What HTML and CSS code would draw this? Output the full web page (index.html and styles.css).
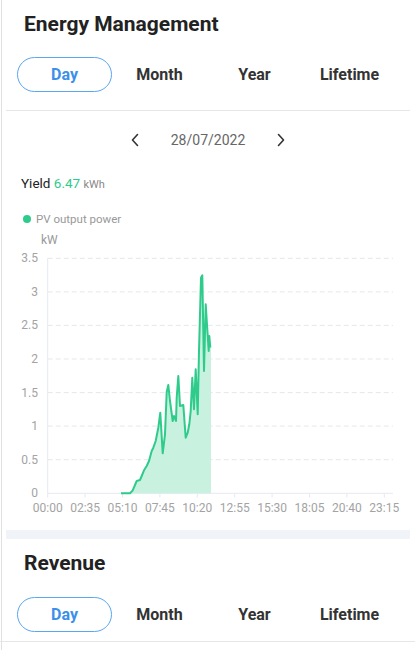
FILE: index.html
```html
<!DOCTYPE html>
<html>

<head>
  <title>Energy Management</title>
  <link rel="stylesheet" href="styles.css">
</head>

<body>
  <div class="page">
    <div class="card">
      <h2 class="card-title">Energy Management</h2>
      <div class="tabs-wrap">
        <div class="tabs">
          <div class="tab active">Day</div>
          <div class="tab">Month</div>
          <div class="tab">Year</div>
          <div class="tab">Lifetime</div>
        </div>
      </div>

      <div class="date-row">
        <svg class="chev" width="8" height="14" viewBox="0 0 8 14"><polyline points="6.5,1.5 1.5,7 6.5,12.5" /></svg>
        <span class="date">28/07/2022</span>
        <svg class="chev" width="8" height="14" viewBox="0 0 8 14"><polyline points="1.5,1.5 6.5,7 1.5,12.5" /></svg>
      </div>

      <div class="yield">Yield <span class="yield-value">6.47</span> <span class="yield-unit">kWh</span></div>

      <div class="legend"><span class="dot"></span>PV output power</div>
      <div class="unit">kW</div>

      <!-- chart, drawn in page coordinates -->
      <svg class="chart" width="404" height="271" viewBox="6 247 404 271">
        <g class="grid">
          <line x1="47.7" y1="257.3" x2="393" y2="257.3" />
          <line x1="47.7" y1="290.9" x2="393" y2="290.9" />
          <line x1="47.7" y1="324.4" x2="393" y2="324.4" />
          <line x1="47.7" y1="358" x2="393" y2="358" />
          <line x1="47.7" y1="391.6" x2="393" y2="391.6" />
          <line x1="47.7" y1="425.1" x2="393" y2="425.1" />
          <line x1="47.7" y1="458.7" x2="393" y2="458.7" />
        </g>
        <g class="axis">
          <line x1="47.7" y1="257.3" x2="47.7" y2="492.3" />
          <line x1="47.7" y1="492.3" x2="393" y2="492.3" />
          <line x1="47.7" y1="492.3" x2="47.7" y2="496.5" />
          <line x1="85.1" y1="492.3" x2="85.1" y2="496.5" />
          <line x1="122.5" y1="492.3" x2="122.5" y2="496.5" />
          <line x1="159.9" y1="492.3" x2="159.9" y2="496.5" />
          <line x1="197.3" y1="492.3" x2="197.3" y2="496.5" />
          <line x1="234.7" y1="492.3" x2="234.7" y2="496.5" />
          <line x1="272.1" y1="492.3" x2="272.1" y2="496.5" />
          <line x1="309.5" y1="492.3" x2="309.5" y2="496.5" />
          <line x1="346.9" y1="492.3" x2="346.9" y2="496.5" />
          <line x1="384.3" y1="492.3" x2="384.3" y2="496.5" />
        </g>
        <g class="ylabels">
          <text x="38" y="257.3">3.5</text>
          <text x="38" y="290.9">3</text>
          <text x="38" y="324.4">2.5</text>
          <text x="38" y="358">2</text>
          <text x="38" y="391.6">1.5</text>
          <text x="38" y="425.1">1</text>
          <text x="38" y="458.7">0.5</text>
          <text x="38" y="492.3">0</text>
        </g>
        <g class="xlabels">
          <text x="47.7" y="507">00:00</text>
          <text x="85.1" y="507">02:35</text>
          <text x="122.5" y="507">05:10</text>
          <text x="159.9" y="507">07:45</text>
          <text x="197.3" y="507">10:20</text>
          <text x="234.7" y="507">12:55</text>
          <text x="272.1" y="507">15:30</text>
          <text x="309.5" y="507">18:05</text>
          <text x="346.9" y="507">20:40</text>
          <text x="384.3" y="507">23:15</text>
        </g>
        <polygon class="area" points="121,492.3 130,492.3 132.7,489.3 135,484 136.7,480 140,479 141.7,475 144,469.3 146.7,465 149,460 151.7,450 153.3,446.7 155.7,440 158.3,426.7 160.3,411.7 162.7,452.3 165,433.3 166.7,391 168.3,384 170,400 172.7,420 174,415 176,420 176.7,396.7 178.3,375 180,405 183.3,404 185.7,436.7 187.7,431.7 189.3,423.3 190.7,410 192.3,376.7 194,408.3 195.7,368.3 197.7,413.3 199,350 201,276.7 202.3,274.3 204,370 205.7,303.3 207.3,328.3 208.7,350 209.3,335 210.3,346.7 211,346 211,492.3" />
        <polyline class="line" points="121,492.3 130,492.3 132.7,489.3 135,484 136.7,480 140,479 141.7,475 144,469.3 146.7,465 149,460 151.7,450 153.3,446.7 155.7,440 158.3,426.7 160.3,411.7 162.7,452.3 165,433.3 166.7,391 168.3,384 170,400 172.7,420 174,415 176,420 176.7,396.7 178.3,375 180,405 183.3,404 185.7,436.7 187.7,431.7 189.3,423.3 190.7,410 192.3,376.7 194,408.3 195.7,368.3 197.7,413.3 199,350 201,276.7 202.3,274.3 204,370 205.7,303.3 207.3,328.3 208.7,350 209.3,335 210.3,346.7" />
      </svg>
    </div>

    <div class="band"></div>

    <div class="card">
      <h2 class="card-title">Revenue</h2>
      <div class="tabs-wrap tabs-wrap-last">
        <div class="tabs">
          <div class="tab active">Day</div>
          <div class="tab">Month</div>
          <div class="tab">Year</div>
          <div class="tab">Lifetime</div>
        </div>
      </div>
    </div>
  </div>
</body>

</html>
```

FILE: styles.css
```css
body,
html {
  margin: 0;
  padding: 0;
  background: #fff;
  font-family: Roboto, "Liberation Sans", sans-serif;
}

.page {
  margin-left: 1px;
  border-left: 1px solid #e0e0e0;
  padding: 0 5px 0 4px;
  min-height: 650px;
}

.card {
  padding-top: 12px;
}

.card-title {
  margin: 0;
  padding-left: 18px;
  font-size: 21px;
  line-height: 24px;
  font-weight: 700;
  color: #222;
}

.tabs-wrap {
  padding-top: 21px;
  padding-bottom: 18px;
  border-bottom: 1px solid #e6e6e6;
}

.tabs-wrap-last {
  padding-top: 22px;
  padding-bottom: 9px;
  margin-left: -6px;
  margin-right: -5px;
  padding-left: 6px;
}

.tabs {
  display: grid;
  grid-template-columns: repeat(4, 95px);
  margin-left: 11px;
}

.tab {
  height: 35px;
  box-sizing: border-box;
  display: flex;
  align-items: center;
  justify-content: center;
  font-size: 16px;
  font-weight: 700;
  color: #333;
}

.tab.active {
  border: 1.5px solid #5aa6ef;
  border-radius: 18px;
  color: #3b90e9;
}

.date-row {
  margin-top: 14px;
  height: 30px;
  display: flex;
  align-items: center;
  justify-content: center;
  gap: 32px;
}

.date {
  font-size: 14px;
  color: #666;
}

.chev polyline {
  fill: none;
  stroke: #333;
  stroke-width: 1.6px;
  stroke-linecap: round;
  stroke-linejoin: round;
}

.yield {
  margin-top: 18px;
  padding-left: 15px;
  height: 20px;
  font-size: 13.5px;
  line-height: 20px;
  color: #222;
}

.yield-value {
  color: #2ecb8b;
}

.yield-unit {
  font-size: 11px;
  color: #888;
}

.legend {
  margin-top: 18px;
  padding-left: 17px;
  display: flex;
  align-items: center;
  font-size: 11.5px;
  line-height: 16px;
  color: #999;
}

.dot {
  width: 8px;
  height: 8px;
  border-radius: 50%;
  background: #2ecb8b;
  margin-right: 5px;
}

.unit {
  margin-top: 5px;
  padding-left: 35px;
  font-size: 12px;
  line-height: 16px;
  color: #999;
}

.chart {
  display: block;
}

.grid line {
  stroke: #e4e7ed;
  stroke-width: 1px;
  stroke-dasharray: 5 3;
}

.axis line {
  stroke: #e6e9f0;
  stroke-width: 1px;
}

.ylabels text {
  font-size: 12px;
  fill: #a3a3a3;
  text-anchor: end;
  dominant-baseline: central;
}

.xlabels text {
  font-size: 12px;
  fill: #a3a3a3;
  text-anchor: middle;
  dominant-baseline: central;
}

.area {
  fill: #c8f2df;
}

.line {
  fill: none;
  stroke: #2ecb8b;
  stroke-width: 2px;
  stroke-linejoin: round;
}

.band {
  margin-top: 11px;
  height: 9px;
  background: #f0f3f7;
}
```
